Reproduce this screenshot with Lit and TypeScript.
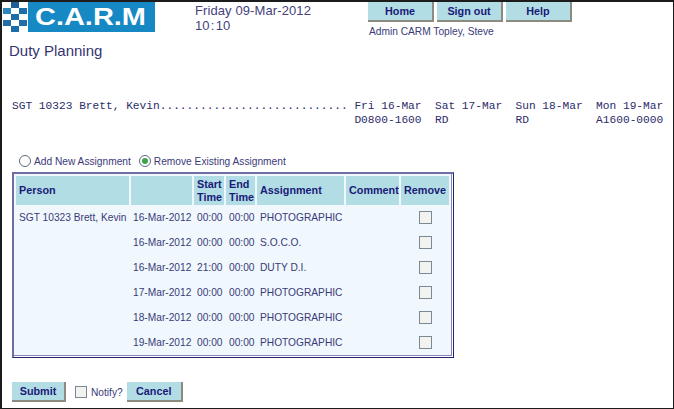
import { LitElement, html, svg, css } from "lit";
import { customElement } from "lit/decorators.js";

const rows = [
  ["SGT 10323 Brett, Kevin", "16-Mar-2012", "00:00", "00:00", "PHOTOGRAPHIC"],
  ["", "16-Mar-2012", "00:00", "00:00", "S.O.C.O."],
  ["", "16-Mar-2012", "21:00", "00:00", "DUTY D.I."],
  ["", "17-Mar-2012", "00:00", "00:00", "PHOTOGRAPHIC"],
  ["", "18-Mar-2012", "00:00", "00:00", "PHOTOGRAPHIC"],
  ["", "19-Mar-2012", "00:00", "00:00", "PHOTOGRAPHIC"],
];

const checks: [number, number, string][] = [
  [9, 0, "#1b5f96"],
  [1, 6, "#2a86bb"],
  [17, 6, "#1b6fa8"],
  [9, 12, "#1b6fa8"],
  [1, 18, "#1f6ea6"],
  [17, 18, "#1f6ea6"],
  [9, 24, "#1b6fa8"],
];

@customElement("app-root")
export class AppRoot extends LitElement {
  static styles = css`
    :host {
      display: block;
      box-sizing: border-box;
      width: 674px;
      height: 409px;
      border: solid #1c1c1c;
      border-width: 2px 1px 1px 2px;
      background: #fff;
      color: #3a3a78;
      font-family: "Liberation Sans", Arial, sans-serif;
      font-size: 10.2px;
      overflow: hidden;
    }
    .top { display: flex; align-items: flex-start; height: 34px; }
    .logo { display: block; width: 155px; height: 31px; flex: none; }
    .date { margin-left: 38px; margin-top: 1px; font-size: 13px; line-height: 15px; width: 173px; flex: none; letter-spacing: 0.1px; color: #46417e; }
    .nav { display: flex; flex-direction: column; }
    .navbtns { display: flex; gap: 3px; }
    .btn {
      box-sizing: border-box;
      background: #b2dde4;
      border: 0;
      border-right: 2px solid #8d8b80;
      border-bottom: 2px solid #8d8b80;
      color: #1a1a78;
      font: bold 10.8px "Liberation Sans", Arial, sans-serif;
      display: flex; align-items: center; justify-content: center;
      height: 20px;
      padding: 0;
    }
    .w66 { width: 66px; }
    .w54 { width: 54px; }
    .w56 { width: 56px; }
    .who { margin-top: 4px; margin-left: 1px; }
    h1 { font-weight: 400; font-size: 15px; line-height: 18px; margin: 6px 0 0 7px; color: #35346f; }
    pre { font-family: "Liberation Mono", monospace; font-size: 11.2px; line-height: 14px; margin: 39px 0 0 10px; color: #2c2c6a; }
    .radios { display: flex; align-items: center; margin: 27px 0 0 17px; height: 14px; }
    .radio { box-sizing: border-box; width: 12px; height: 12px; border: 1px solid #5c6b7c; border-radius: 50%; background: #fff; margin-right: 3px; display: flex; align-items: center; justify-content: center; }
    .radio.on::after { content: ""; width: 6px; height: 6px; border-radius: 50%; background: #3fa34a; }
    .radios .l { margin-right: 8px; }
    .wrap {
      box-sizing: border-box;
      width: 442px;
      height: 186px;
      margin: 4px 0 0 10px;
      border-style: solid;
      border-width: 2px 1px 1px 2px;
      border-color: #6f6ca6 #26246e #26246e #6f6ca6;
      padding: 2px;
      background: #f0f8fd;
      box-shadow: inset -1px -1px 0 #fff, inset -2px -2px 0 #8784b8;
    }
    table { border-collapse: separate; border-spacing: 2px 0; table-layout: fixed; width: 437px; margin-left: -2px; }
    .c1 { width: 113px; }
    .c2 { width: 61px; }
    .c3 { width: 30px; }
    .c4 { width: 29px; }
    .c5 { width: 87px; }
    .c6 { width: 53px; }
    .c7 { width: 48px; }
    th { background: #b2dde4; height: 29px; padding: 0 1px 0 3px; text-align: left; font-size: 10.8px; line-height: 13px; color: #1a1a78; }
    th.c { text-align: center; padding: 0; }
    td { height: 25px; padding: 0 0 0 3px; white-space: nowrap; }
    td:nth-child(2) { padding-left: 2px; }
    td.c { text-align: center; padding: 0; }
    .box { display: inline-block; vertical-align: middle; width: 13px; height: 13px; box-sizing: border-box; border: 1px solid #7b8895; background: #f2f2ef; }
    .foot { display: flex; align-items: center; margin: 24px 0 0 10px; }
    .foot .box { width: 12px; height: 12px; margin: 0 4px 0 9px; }
    .foot .n { margin-right: 4px; }
  `;

  render() {
    return html`
      <div class="top">
        <svg class="logo" viewBox="0 0 155 31">
          <rect x="26" y="0" width="127" height="30" fill="#1688c4"></rect>
          ${checks.map(([x, y, f]) => svg`<rect x=${x} y=${y} width="8" height="6" fill=${f}></rect>`)}
          <text x="33" y="23" textLength="111" lengthAdjust="spacingAndGlyphs" fill="#fff" font-family="Liberation Sans" font-weight="700" font-size="23.5">C.A.R.M</text>
        </svg>
        <div class="date">Friday 09-Mar-2012<br />10&#8202;:&#8202;10</div>
        <div class="nav">
          <div class="navbtns">
            <button class="btn w66">Home</button>
            <button class="btn w66">Sign out</button>
            <button class="btn w66">Help</button>
          </div>
          <div class="who">Admin CARM Topley, Steve</div>
        </div>
      </div>
      <h1>Duty Planning</h1>
      <pre>SGT 10323 Brett, Kevin............................ Fri 16-Mar  Sat 17-Mar  Sun 18-Mar  Mon 19-Mar
                                                   D0800-1600  RD          RD          A1600-0000</pre>
      <div class="radios">
        <span class="radio"></span><span class="l">Add New Assignment</span>
        <span class="radio on"></span><span>Remove Existing Assignment</span>
      </div>
      <div class="wrap">
        <table>
          <colgroup>
            <col class="c1" /><col class="c2" /><col class="c3" /><col class="c4" /><col class="c5" /><col class="c6" /><col class="c7" />
          </colgroup>
          <tr>
            <th>Person</th><th></th><th>Start Time</th><th>End Time</th><th>Assignment</th><th>Comment</th><th class="c">Remove</th>
          </tr>
          ${rows.map(
            (r) => html`<tr>
              ${r.map((c) => html`<td>${c}</td>`)}
              <td></td>
              <td class="c"><span class="box"></span></td>
            </tr>`
          )}
        </table>
      </div>
      <div class="foot">
        <button class="btn w54">Submit</button>
        <span class="box"></span><span class="n">Notify?</span>
        <button class="btn w56">Cancel</button>
      </div>
    `;
  }
}
